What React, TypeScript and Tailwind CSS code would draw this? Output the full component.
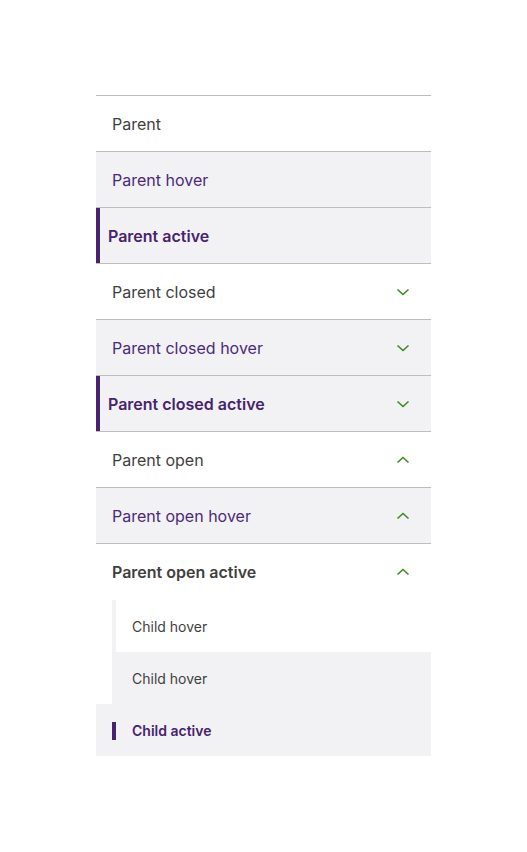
import React from 'react';

type Variant = 'default' | 'hover' | 'active';
type Chevron = 'none' | 'down' | 'up';

const ChevronIcon = ({ dir }: { dir: 'down' | 'up' }) => (
  <svg width="16" height="16" viewBox="0 0 16 16" fill="none" className="shrink-0">
    <path
      d={dir === 'down' ? 'M2.5 5.5L8 10.5L13.5 5.5' : 'M2.5 10.5L8 5.5L13.5 10.5'}
      stroke="#3b8a1c"
      strokeWidth="1.6"
    />
  </svg>
);

function ParentRow({
  label,
  variant,
  chevron = 'none',
  boldPlain = false,
}: {
  label: string;
  variant: Variant;
  chevron?: Chevron;
  boldPlain?: boolean;
}) {
  const bg = variant === 'default' ? 'bg-white' : 'bg-[#f2f2f4]';
  const text =
    variant === 'hover'
      ? 'text-[#4b2a7a]'
      : variant === 'active'
      ? 'text-[#47236f] font-semibold'
      : boldPlain
      ? 'text-[#3f3f3f] font-semibold'
      : 'text-[#3f3f3f]';

  return (
    <div className={`flex h-[56px] items-center border-t border-[#bdbdbd] ${bg}`}>
      {variant === 'active' ? (
        <div className="flex h-full w-full items-center border-l-4 border-[#47236f] pl-2 pr-5">
          <span className={`flex-1 text-base ${text}`}>{label}</span>
          {chevron !== 'none' && <ChevronIcon dir={chevron} />}
        </div>
      ) : (
        <div className="flex h-full w-full items-center pl-4 pr-5">
          <span className={`flex-1 text-base ${text}`}>{label}</span>
          {chevron !== 'none' && <ChevronIcon dir={chevron} />}
        </div>
      )}
    </div>
  );
}

export default function App() {
  return (
    <div className="min-h-screen bg-white pt-[95px]" style={{ fontFamily: 'Inter, "Noto Sans", sans-serif' }}>
      <nav className="ml-[96px] w-[335px]">
        <ParentRow label="Parent" variant="default" />
        <ParentRow label="Parent hover" variant="hover" />
        <ParentRow label="Parent active" variant="active" />
        <ParentRow label="Parent closed" variant="default" chevron="down" />
        <ParentRow label="Parent closed hover" variant="hover" chevron="down" />
        <ParentRow label="Parent closed active" variant="active" chevron="down" />
        <ParentRow label="Parent open" variant="default" chevron="up" />
        <ParentRow label="Parent open hover" variant="hover" chevron="up" />
        <ParentRow label="Parent open active" variant="default" chevron="up" boldPlain />

        <div className="ml-4 mt-px border-l-4 border-[#f2f2f4]">
          <div className="flex h-[52px] items-center bg-white pl-4 pt-0.5 text-sm text-[#3f3f3f]">Child hover</div>
          <div className="flex h-[52px] items-center bg-[#f2f2f4] pl-4 pt-0.5 text-sm text-[#3f3f3f]">Child hover</div>
        </div>
        <div className="flex h-[52px] items-center bg-[#f2f2f4] pl-4 pt-0.5">
          <span className="h-[18px] w-1 bg-[#47236f]" />
          <span className="pl-4 text-sm font-semibold text-[#47236f]">Child active</span>
        </div>
      </nav>
    </div>
  );
}
